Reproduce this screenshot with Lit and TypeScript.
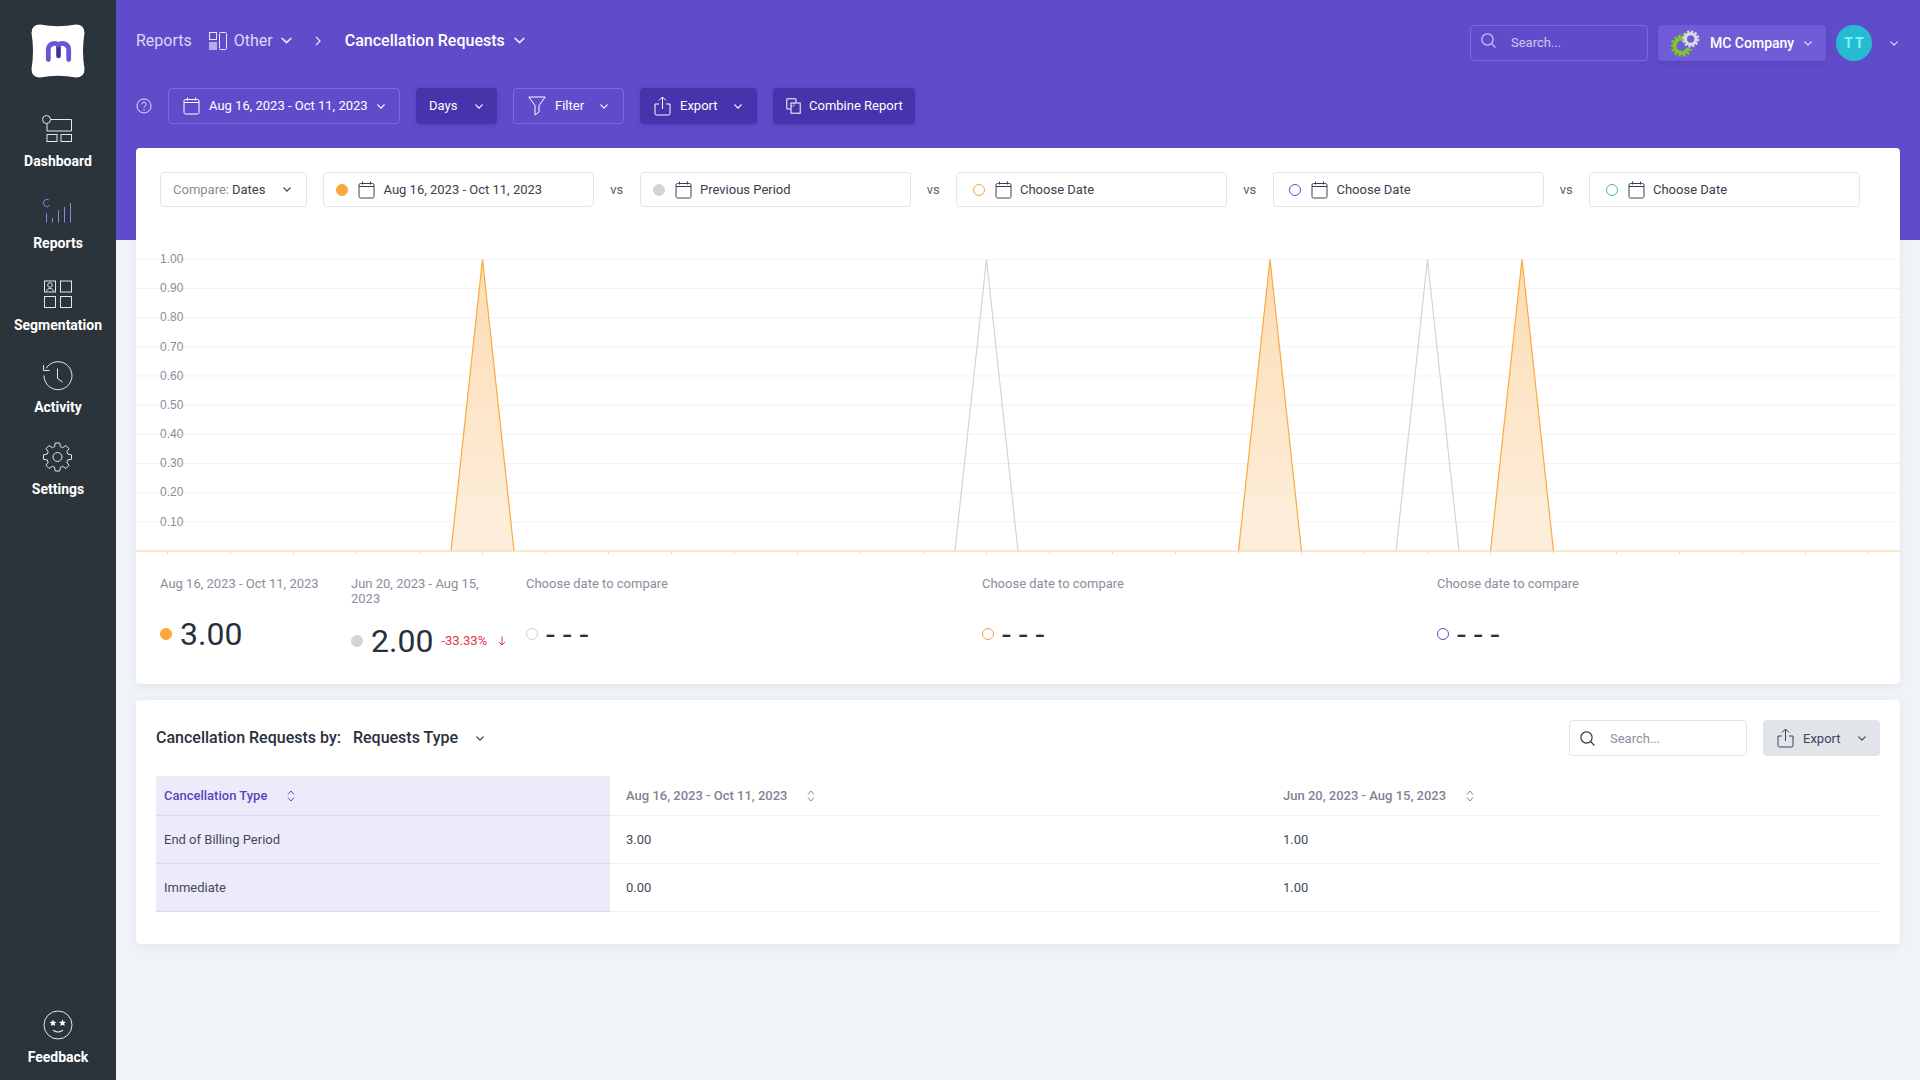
import { LitElement, html, css, svg } from "lit";
import { customElement } from "lit/decorators.js";

const chev = (c = "") => html`<svg class="chev ${c}" width="8" height="5" viewBox="0 0 10 6"><path d="M1 1l4 4 4-4" fill="none" stroke="currentColor" stroke-width="1.500" stroke-linecap="round" stroke-linejoin="round"/></svg>`;
const cal = () => html`<svg class="ic" width="17" height="18" viewBox="0 0 17 18"><path d="M1 5.5h15M4.5 0.5v3M12.5 0.5v3M2.5 2.5h12a1.5 1.5 0 0 1 1.5 1.5v11.5a1.5 1.5 0 0 1-1.5 1.5h-12A1.5 1.5 0 0 1 1 15.500V4a1.5 1.5 0 0 1 1.500-1.500z" fill="none" stroke="currentColor" stroke-width="1"/></svg>`;
const share = () => html`<svg class="ic" width="17" height="20" viewBox="0 0 17 20"><path d="M8.500 13V1M5 4.500L8.500 1 12 4.500M5 8H1v9.500a1.500 1.500 0 0 0 1.500 1.500h12a1.500 1.500 0 0 0 1.500-1.500V8h-4" fill="none" stroke="currentColor" stroke-width="1" stroke-linejoin="round"/></svg>`;
const mag = () => html`<svg class="ic" width="15" height="15" viewBox="0 0 15 15"><circle cx="6.500" cy="6.500" r="5.600" fill="none" stroke="currentColor" stroke-width="1.200"/><path d="M10.600 10.600L14 14" stroke="currentColor" stroke-width="1.200" stroke-linecap="round"/></svg>`;
const sortIc = (c = "") => html`<svg class="sort ${c}" width="8" height="12" viewBox="0 0 8 12"><path d="M1 4.500l3-3.500 3 3.500M1 7.500l3 3.500 3-3.500" fill="none" stroke="currentColor" stroke-width="1"/></svg>`;

function gearPath(cx: number, cy: number, ro: number, ri: number, n: number) {
  const pts: string[] = [];
  const st = (Math.PI * 2) / n;
  for (let i = 0; i < n; i++) {
    const a = i * st - Math.PI / 2;
    const p = (r: number, t: number) => `${(cx + r * Math.cos(a + t * st)).toFixed(2)} ${(cy + r * Math.sin(a + t * st)).toFixed(2)}`;
    pts.push(`${i ? "L" : "M"}${p(ri, -0.36)}`, `L${p(ro, -0.2)}`, `L${p(ro, 0.2)}`, `L${p(ri, 0.36)}`);
    pts.push(`A${ri} ${ri} 0 0 1 ${p(ri, 0.64)}`);
  }
  return pts.join(" ") + "Z";
}

function arc(cx: number, cy: number, r: number, a0: number, a1: number) {
  const rad = (d: number) => (d * Math.PI) / 180;
  const x0 = cx + r * Math.cos(rad(a0)), y0 = cy + r * Math.sin(rad(a0));
  const x1 = cx + r * Math.cos(rad(a1)), y1 = cy + r * Math.sin(rad(a1));
  const large = Math.abs(a1 - a0) > 180 ? 1 : 0;
  return `M${x0.toFixed(2)} ${y0.toFixed(2)}A${r} ${r} 0 ${large} 0 ${x1.toFixed(2)} ${y1.toFixed(2)}`;
}

const navIcons: Record<string, unknown> = {
  Dashboard: svg`<circle cx="4.500" cy="6.500" r="4"/><path d="M8.500 6.500H29.500V18H5V10.500"/><rect x="5" y="21.500" width="10" height="7"/><rect x="19" y="21.500" width="10.500" height="7"/>`,
  Reports: svg`<g stroke="#8f83e6"><path d="${arc(5, 8, 3.6, -60, -320)}"/><path d="M4.500 18.500V27.500M10.500 23V27.500M16.500 15V27.500M22.500 12V27.500M28.500 8V27.500"/></g>`,
  Segmentation: svg`<rect x="2.500" y="4" width="11" height="11"/><rect x="18.500" y="4" width="11" height="11"/><rect x="2.500" y="19.500" width="11" height="11"/><rect x="18.500" y="19.500" width="11" height="11"/><circle cx="8" cy="8" r="2.300"/><path d="M4.500 14.500C4.500 10.500 11.500 10.500 11.500 14.500"/>`,
  Activity: svg`<path d="M4 9.500A14 14 0 1 1 2 16.500"/><path d="M1.500 6V11.500H7.500"/><path d="M15.500 9.500V19.500L20.500 23"/>`,
  Settings: svg`<path d="${gearPath(15.5, 16, 14.2, 10.6, 8)}"/><circle cx="15.500" cy="16" r="4.500"/>`,
};

const nav = ["Dashboard", "Reports", "Segmentation", "Activity", "Settings"];

const gridVals = [1, 0.9, 0.8, 0.7, 0.6, 0.5, 0.4, 0.3, 0.2, 0.1];
const Y_TOP = 52.3, Y_BASE = 344, STEP_X = 31.5;
const yOf = (v: number) => Y_BASE - v * (Y_BASE - Y_TOP);
const orangePeaks = [11, 36, 44];
const grayPeaks = [27, 41];
const ticks = Array.from({ length: 28 }, (_, i) => STEP_X + i * 63);

const compareDates = [
  { cls: "filled", color: "#fca73a", text: "Aug 16, 2023 - Oct 11, 2023" },
  { cls: "filled", color: "#d4d4d4", text: "Previous Period" },
  { cls: "ring", color: "#f0a04f", text: "Choose Date" },
  { cls: "ring", color: "#604ccb", text: "Choose Date" },
  { cls: "ring", color: "#4cbb7f", text: "Choose Date" },
];

const stats = [
  { label: "Aug 16, 2023 - Oct 11, 2023", cls: "filled", color: "#fca73a", value: "3.00", delta: false },
  { label: "Jun 20, 2023 - Aug 15, 2023", cls: "filled", color: "#d4d4d4", value: "2.00", delta: true },
  { label: "Choose date to compare", cls: "ring", color: "#cfcfcf", value: "- - -", delta: false },
  { label: "Choose date to compare", cls: "ring", color: "#f0a04f", value: "- - -", delta: false },
  { label: "Choose date to compare", cls: "ring", color: "#604ccb", value: "- - -", delta: false },
];

const rows = [
  ["End of Billing Period", "3.00", "1.00"],
  ["Immediate", "0.00", "1.00"],
];

@customElement("app-root")
export class AppRoot extends LitElement {
  static styles = css`
    :host { display: flex; width: 1920px; height: 1080px; overflow: hidden; font-family: Roboto, sans-serif; font-size: 13px; color: #2a2f3e; background: #f0f3f8; }
    * { box-sizing: border-box; }
    svg { display: block; flex: none; }

    .side { width: 116px; flex: none; background: #2b333b; display: flex; flex-direction: column; align-items: center; padding: 24px 0 15px; color: #fff; }
    .logo { margin-bottom: 35px; }
    .nav { display: flex; flex-direction: column; gap: 26px; align-items: center; }
    .nav-item { display: flex; flex-direction: column; align-items: center; gap: 8px; }
    .nav-ic { fill: none; stroke: #e6e8ea; stroke-width: 1; }
    .nav-label { font-size: 14px; line-height: 16px; font-weight: 700; color: #fff; white-space: nowrap; }
    .feedback { margin-top: auto; }
    .star { fill: #fff; stroke: none; }

    .main { flex: 1; min-width: 0; padding: 25px 20px 0; background: linear-gradient(#604ccb 0 240px, #f0f3f8 240px); }
    .top { display: flex; align-items: center; height: 36px; color: #fff; }
    .crumb { font-size: 16px; color: #dcd7f5; margin-bottom: 5px; }
    .other-ic { margin: 0 7px 5px 17px; }
    .top .chev { color: #e3dff8; }
    .c1, .c2 { width: 11px; height: 7px; margin-bottom: 5px; }
    .c1 { margin-left: 8px; }
    .sep { margin: 0 24px 5px 23px; color: #e3dff8; }
    .cur { font-size: 16px; font-weight: 500; color: #fff; margin-bottom: 5px; }
    .c2 { margin-left: 9px; }
    .spacer { flex: 1; }
    .tsearch { width: 178px; height: 36px; border: 1px solid #7c6bd8; border-radius: 4px; display: flex; align-items: center; padding: 0 0 2px 10px; gap: 15px; color: #cfc8f3; font-size: 13px; }
    .tsearch .ic { margin-top: -4px; }
    .company { width: 168px; height: 36px; margin-left: 10px; border-radius: 4px; background: #715cd8; display: flex; align-items: center; padding: 0 14px 0 13px; font-size: 14px; font-weight: 500; color: #fff; box-shadow: 0 2px 6px rgba(50, 30, 130, .18); }
    .company span { margin-left: 9px; }
    .company .chev { margin-left: auto; }
    .avatar { width: 36px; height: 36px; margin-left: 10px; border-radius: 50%; background: #26bbd1; color: #7ff4f6; font-weight: 700; font-size: 14px; letter-spacing: 2px; display: flex; align-items: center; justify-content: center; padding-left: 2px; }
    .ach { margin: 0 2px 0 18px; }

    .tools { display: flex; align-items: center; height: 36px; margin-top: 27px; color: #fff; }
    .help { margin: 0 16px 0 0; color: #e8e5f9; }
    .btn { height: 36px; border-radius: 4px; display: flex; align-items: center; font-size: 13px; color: #fff; white-space: nowrap; flex: none; }
    .tools .btn span { margin-top: -1px; }
    .btn .chev { margin-left: auto; }
    .line { border: 1px solid #7c6bd8; }
    .solid { background: #4733ac; box-shadow: 0 1px 4px rgba(40, 25, 120, .25); }
    .b-date { width: 232px; padding: 0 14px 0 14px; gap: 9px; }
    .b-days { width: 81px; margin-left: 16px; padding: 0 14px 0 13px; }
    .b-filter { width: 111px; margin-left: 16px; padding: 0 15px 0 14px; gap: 9px; }
    .b-export { width: 117px; margin-left: 16px; padding: 0 15px 0 14px; gap: 9px; }
    .b-comb { width: 142px; margin-left: 16px; padding: 0 13px; gap: 8px; }

    .card { background: #fff; border-radius: 4px; box-shadow: 0 2px 8px rgba(60, 70, 100, .08); }
    .card1 { margin-top: 24px; height: 536px; padding-top: 24px; }
    .cmp { display: flex; align-items: center; padding-left: 24px; height: 35px; }
    .box { height: 35px; border: 1px solid #e3e5e9; border-radius: 4px; display: flex; align-items: center; flex: none; font-size: 13px; color: #3a4050; }
    .dd { width: 147px; margin-right: 16px; padding: 0 15px 0 12px; }
    .dd i { font-style: normal; color: #878c9a; margin-right: 3px; }
    .dd .chev { margin-left: auto; color: #333; }
    .dbox { width: 271px; padding-left: 12px; }
    .dbox.ringed { padding-left: 15.500px; }
    .dbox .ic { margin: 0 8.500px 0 10px; color: #3a4050; }
    .vs { width: 45.500px; text-align: center; flex: none; color: #5a6070; }
    .dot { width: 12px; height: 12px; border-radius: 50%; flex: none; border: 1.200px solid; }
    .chart { width: 1764px; height: 369px; }
    .ylab { font: 12px "Liberation Sans", Arial, sans-serif; fill: #8a8e9b; }

    .stats { display: flex; height: 100px; padding-left: 24px; }
    .stat { display: flex; flex-direction: column; width: 455px; flex: none; }
    .stat:nth-child(1) { width: 191px; }
    .stat:nth-child(2) { width: 175px; padding-right: 18px; }
    .stat:nth-child(3) { width: 456px; }
    .slabel { color: #8a8e9b; font-size: 13px; line-height: 15px; }
    .sval { flex: 1; display: flex; align-items: center; font-size: 32px; line-height: 38px; color: #2a2f3e; }
    .sval .dot { margin-right: 8px; }
    .delta { font-size: 13px; color: #e5344a; margin-left: 8px; }
    .arr { margin-left: 11px; color: #e5344a; }

    .card2 { margin-top: 16px; height: 244px; padding: 20px; }
    .c2head { display: flex; align-items: center; height: 36px; }
    .ttl { font-size: 16px; font-weight: 500; color: #2a2f3e; margin-bottom: 1px; }
    .ttl2 { margin-left: 12px; }
    .c2chev { margin-left: 18px; color: #333; }
    .csearch { width: 178px; height: 36px; border: 1px solid #e3e5ea; border-radius: 4px; display: flex; align-items: center; padding-left: 10px; gap: 15px; color: #8a8e9b; }
    .csearch .ic { color: #2f3644; }
    .cexp { width: 117px; margin-left: 16px; background: #e1e4e8; color: #3a4357; padding: 0 14px; gap: 9px; }

    table { width: 1724px; margin-top: 20px; border-collapse: separate; border-spacing: 0; table-layout: fixed; font-size: 13px; }
    th, td { text-align: left; padding: 0 16px; border-bottom: 1px solid #eef0f3; font-weight: 400; }
    th { height: 40px; color: #7f8493; font-weight: 500; }
    td { height: 48px; color: #444a59; }
    .first { background: #edeaf9; border-bottom-color: #dddaeb; padding-left: 8px; }
    th.first { color: #5846bf; }
    .thc { display: flex; align-items: center; gap: 19.500px; }
  `;

  private chartSvg() {
    return html`<svg class="chart" viewBox="0 0 1764 369">
      <defs><linearGradient id="fo" x1="0" y1="0" x2="0" y2="1"><stop offset="0" stop-color="#fcdcb3"/><stop offset="1" stop-color="#fdefdd"/></linearGradient></defs>
      ${gridVals.map((v) => svg`<line x1="0" x2="1764" y1="${yOf(v)}" y2="${yOf(v)}" stroke="#f0f2f7" stroke-width="1"/>`)}
      ${gridVals.map((v) => svg`<text class="ylab" x="24" y="${yOf(v) + 3.8}">${v.toFixed(2)}</text>`)}
      ${ticks.map((x) => svg`<line x1="${x}" x2="${x}" y1="${Y_BASE}" y2="${Y_BASE + 3}" stroke="#e3dccf"/>`)}
      ${grayPeaks.map((p) => svg`<path d="M${(p - 1) * STEP_X} ${Y_BASE}L${p * STEP_X} ${Y_TOP}L${(p + 1) * STEP_X} ${Y_BASE}" fill="none" stroke="#d4d4d4" stroke-width="1.200"/>`)}
      ${orangePeaks.map((p) => svg`<path d="M${(p - 1) * STEP_X} ${Y_BASE}L${p * STEP_X} ${Y_TOP}L${(p + 1) * STEP_X} ${Y_BASE}Z" fill="url(#fo)"/><path d="M${(p - 1) * STEP_X} ${Y_BASE}L${p * STEP_X} ${Y_TOP}L${(p + 1) * STEP_X} ${Y_BASE}" fill="none" stroke="#fba93f" stroke-width="1.200"/>`)}
      <line x1="0" x2="1764" y1="${Y_BASE}" y2="${Y_BASE}" stroke="#f7cf9e" stroke-width="1.200"/>
    </svg>`;
  }

  render() {
    return html`
      <aside class="side">
        <svg class="logo" width="54" height="54" viewBox="0 0 54 54">
          <path d="M9 .5Q27 4 45 .5Q53.500 .5 53.500 9Q50.500 27 53.500 45Q53.500 53.500 45 53.500Q27 50 9 53.500Q.5 53.500 .5 45Q3.500 27 .5 9Q.5 .5 9 .5Z" fill="#fff"/>
          <path d="M27.500 21V32" stroke="#3f2fa0" stroke-width="4.600" stroke-linecap="round"/>
          <path d="M17.300 35.500V25.500A6.300 6.300 0 0 1 27.500 20.800A6.300 6.300 0 0 1 37.700 25.500V35.500" fill="none" stroke="#6a55d8" stroke-width="4.800" stroke-linecap="round"/>
        </svg>
        <nav class="nav">
          ${nav.map((n) => html`<div class="nav-item"><svg class="nav-ic" width="32" height="32" viewBox="0 0 32 32">${navIcons[n]}</svg><div class="nav-label">${n}</div></div>`)}
        </nav>
        <div class="nav-item feedback">
          <svg class="nav-ic" width="32" height="32" viewBox="0 0 32 32"><circle cx="16" cy="16" r="14"/><path class="star" d="M11 10.500l1 2.300 2.500.2-1.900 1.600.6 2.400-2.200-1.300-2.200 1.300.6-2.400-1.900-1.600 2.500-.2z"/><path class="star" d="M20.500 10.500l1 2.300 2.500.2-1.900 1.600.6 2.400-2.200-1.300-2.200 1.300.6-2.400-1.900-1.600 2.500-.2z"/><path d="M11.500 21.500Q16 24.500 20.500 21.500" stroke-width="1.200" stroke-linecap="round"/></svg>
          <div class="nav-label">Feedback</div>
        </div>
      </aside>

      <main class="main">
        <div class="top">
          <span class="crumb">Reports</span>
          <svg class="other-ic" width="18" height="18" viewBox="0 0 18 18"><rect x=".5" y=".5" width="7" height="7" fill="none" stroke="#e8e5f9"/><rect x="0" y="10" width="8" height="8" fill="#b6abec"/><rect x="10.500" y=".5" width="7" height="17" rx="1" fill="none" stroke="#e8e5f9"/></svg>
          <span class="crumb">Other</span>
          ${chev("c1")}
          <svg class="sep" width="6" height="10" viewBox="0 0 6 10"><path d="M1 1l4 4-4 4" fill="none" stroke="currentColor" stroke-width="1.300"/></svg>
          <span class="cur">Cancellation Requests</span>
          ${chev("c2")}
          <div class="spacer"></div>
          <div class="tsearch">${mag()}<span>Search...</span></div>
          <div class="company">
            <svg width="30" height="28" viewBox="0 0 30 28">
              <g fill="none" stroke="#7dc62a">
                <path d="${arc(10.7, 16.7, 7.2, -70, -340)}" stroke-width="4"/>
                <path d="${arc(10.7, 16.7, 10, -70, -340)}" stroke-width="2.500" stroke-dasharray="2.400 2.100"/>
              </g>
              <g fill="none" stroke="#dcdcdc">
                <circle cx="19.700" cy="10" r="5.300" stroke-width="3.200"/>
                <circle cx="19.700" cy="10" r="7.600" stroke-width="2" stroke-dasharray="2.200 1.800"/>
              </g>
            </svg>
            <span>MC Company</span>${chev()}
          </div>
          <div class="avatar">TT</div>
          ${chev("ach")}
        </div>

        <div class="tools">
          <svg class="help" width="16" height="16" viewBox="0 0 16 16"><circle cx="8" cy="8" r="7" fill="none" stroke="currentColor"/><path d="M5.900 6.300a2.100 2.100 0 1 1 3.200 1.800c-.7.400-1.100.8-1.100 1.600" fill="none" stroke="currentColor"/><circle cx="8" cy="11.700" r=".7" fill="currentColor"/></svg>
          <div class="btn line b-date">${cal()}<span>Aug 16, 2023 - Oct 11, 2023</span>${chev()}</div>
          <div class="btn solid b-days"><span>Days</span>${chev()}</div>
          <div class="btn line b-filter"><svg class="ic" width="18" height="20" viewBox="0 0 18 20"><path d="M.8 1h16.400L11 9.500V16l-4 3V9.500z" fill="none" stroke="currentColor"/></svg><span>Filter</span>${chev()}</div>
          <div class="btn solid b-export">${share()}<span>Export</span>${chev()}</div>
          <div class="btn solid b-comb"><svg class="ic" width="15" height="16" viewBox="0 0 15 16"><path d="M5 11H.8V.8H10V5" fill="none" stroke="currentColor"/><rect x="5" y="5" width="9.200" height="10.200" fill="none" stroke="currentColor"/><path d="M5 8h3M8 5v3" fill="none" stroke="currentColor" stroke-dasharray="1.500 1"/></svg><span>Combine Report</span></div>
        </div>

        <section class="card card1">
          <div class="cmp">
            <div class="box dd"><i>Compare:</i> Dates ${chev()}</div>
            ${compareDates.map((d, i) => html`
              <div class="box dbox ${d.cls === "ring" ? "ringed" : ""}">
                <span class="dot" style="border-color:${d.color};background:${d.cls === "ring" ? "transparent" : d.color}"></span>
                ${cal()}<span>${d.text}</span>
              </div>
              ${i < 4 ? html`<span class="vs">vs</span>` : ""}`)}
          </div>
          ${this.chartSvg()}
          <div class="stats">
            ${stats.map((s) => html`
              <div class="stat">
                <div class="slabel">${s.label}</div>
                <div class="sval">
                  <span class="dot" style="border-color:${s.color};background:${s.cls === "ring" ? "transparent" : s.color}"></span>
                  <span>${s.value}</span>
                  ${s.delta ? html`<span class="delta">-33.33%</span><svg class="arr" width="8" height="10" viewBox="0 0 8 10"><path d="M4 .5V9M1 6l3 3 3-3" fill="none" stroke="currentColor"/></svg>` : ""}
                </div>
              </div>`)}
          </div>
        </section>

        <section class="card card2">
          <div class="c2head">
            <span class="ttl">Cancellation Requests by:</span>
            <span class="ttl ttl2">Requests Type</span>
            ${chev("c2chev")}
            <div class="spacer"></div>
            <div class="csearch">${mag()}<span>Search...</span></div>
            <div class="btn cexp">${share()}<span>Export</span>${chev()}</div>
          </div>
          <table>
            <colgroup><col style="width:454px"/><col style="width:657px"/><col/></colgroup>
            <thead><tr>
              <th class="first"><div class="thc">Cancellation Type ${sortIc()}</div></th>
              <th><div class="thc">Aug 16, 2023 - Oct 11, 2023 ${sortIc()}</div></th>
              <th><div class="thc">Jun 20, 2023 - Aug 15, 2023 ${sortIc()}</div></th>
            </tr></thead>
            <tbody>
              ${rows.map((r) => html`<tr><td class="first">${r[0]}</td><td>${r[1]}</td><td>${r[2]}</td></tr>`)}
            </tbody>
          </table>
        </section>
      </main>
    `;
  }
}
